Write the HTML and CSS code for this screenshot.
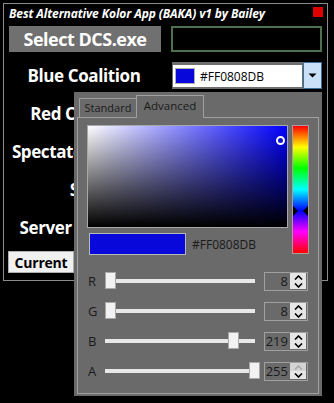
FILE: index.html
```html
<!DOCTYPE html>
<html lang="en">
<head>
    <meta charset="UTF-8">
    <meta name="viewport" content="width=device-width, initial-scale=1.0">
    <title>BAKA</title>
    <link rel="stylesheet" href="styles.css">
</head>
<body>
    <div class="window">
        <!-- Title bar -->
        <div class="title-bar">
            <span class="title">Best Alternative Kolor App (BAKA) v1 by Bailey</span>
            <span class="close-box"></span>
        </div>

        <!-- DCS path picker -->
        <div class="path-row">
            <button class="select-btn">Select DCS.exe</button>
            <div class="path-box"></div>
        </div>

        <!-- Coalition colour rows -->
        <div class="rows">
            <div class="label">Blue Coalition</div>
            <div class="color-combo">
                <div class="combo-field">
                    <span class="swatch"></span>
                    <span class="combo-text">#FF0808DB</span>
                </div>
                <div class="combo-arrow">
                    <svg width="9" height="5" viewBox="0 0 9 5"><path d="M0.5 0.5 L4.5 4.5 L8.5 0.5 Z" fill="#000"/></svg>
                </div>
            </div>

            <div class="label">Red Coalition</div>
            <div class="color-combo"></div>

            <div class="label">Spectators Colour</div>
            <div class="color-combo"></div>

            <div class="label">SRS</div>
            <div class="color-combo"></div>

            <div class="label">Server Coalition</div>
            <div class="color-combo"></div>
        </div>

        <button class="current-btn">Current</button>
    </div>

    <!-- Colour picker dropdown -->
    <div class="picker-popup">
        <div class="tab-strip">
            <div class="tab">Standard</div>
            <div class="tab active">Advanced</div>
        </div>
        <div class="tab-panel">
            <div class="picker-top">
                <div class="picker-left">
                    <div class="sv-box">
                        <span class="sv-dot"></span>
                    </div>
                    <div class="preview-row">
                        <div class="preview"></div>
                        <span class="preview-text">#FF0808DB</span>
                    </div>
                </div>
                <div class="hue-bar">
                    <span class="hue-mark left"></span>
                    <span class="hue-mark right"></span>
                </div>
            </div>

            <div class="sliders">
                <div class="slider-row">
                    <span class="slider-label">R</span>
                    <div class="track"><span class="thumb" style="left: 0px;"></span></div>
                    <div class="spin">
                        <span class="spin-value">8</span>
                        <div class="spin-btns">
                            <span class="spin-btn"><svg width="9" height="5" viewBox="0 0 9 5"><path d="M1 4.5 L4.5 1 L8 4.5" fill="none" stroke="#000" stroke-width="1.6"/></svg></span>
                            <span class="spin-btn"><svg width="9" height="5" viewBox="0 0 9 5"><path d="M1 0.5 L4.5 4 L8 0.5" fill="none" stroke="#000" stroke-width="1.6"/></svg></span>
                        </div>
                    </div>
                </div>
                <div class="slider-row">
                    <span class="slider-label">G</span>
                    <div class="track"><span class="thumb" style="left: 0px;"></span></div>
                    <div class="spin">
                        <span class="spin-value">8</span>
                        <div class="spin-btns">
                            <span class="spin-btn"><svg width="9" height="5" viewBox="0 0 9 5"><path d="M1 4.5 L4.5 1 L8 4.5" fill="none" stroke="#000" stroke-width="1.6"/></svg></span>
                            <span class="spin-btn"><svg width="9" height="5" viewBox="0 0 9 5"><path d="M1 0.5 L4.5 4 L8 0.5" fill="none" stroke="#000" stroke-width="1.6"/></svg></span>
                        </div>
                    </div>
                </div>
                <div class="slider-row">
                    <span class="slider-label">B</span>
                    <div class="track"><span class="thumb" style="left: 123px;"></span></div>
                    <div class="spin">
                        <span class="spin-value">219</span>
                        <div class="spin-btns">
                            <span class="spin-btn"><svg width="9" height="5" viewBox="0 0 9 5"><path d="M1 4.5 L4.5 1 L8 4.5" fill="none" stroke="#000" stroke-width="1.6"/></svg></span>
                            <span class="spin-btn"><svg width="9" height="5" viewBox="0 0 9 5"><path d="M1 0.5 L4.5 4 L8 0.5" fill="none" stroke="#000" stroke-width="1.6"/></svg></span>
                        </div>
                    </div>
                </div>
                <div class="slider-row">
                    <span class="slider-label">A</span>
                    <div class="track"><span class="thumb" style="left: 144px;"></span></div>
                    <div class="spin">
                        <span class="spin-value">255</span>
                        <div class="spin-btns">
                            <span class="spin-btn disabled"><svg width="9" height="5" viewBox="0 0 9 5"><path d="M1 4.5 L4.5 1 L8 4.5" fill="none" stroke="#a8a8a8" stroke-width="1.6"/></svg></span>
                            <span class="spin-btn"><svg width="9" height="5" viewBox="0 0 9 5"><path d="M1 0.5 L4.5 4 L8 0.5" fill="none" stroke="#000" stroke-width="1.6"/></svg></span>
                        </div>
                    </div>
                </div>
            </div>
        </div>
    </div>
</body>
</html>
```

FILE: styles.css
```css
/* Dark window theme */
* {
    box-sizing: border-box;
}

body {
    margin: 0;
    padding: 0;
    width: 334px;
    height: 403px;
    background: #000000;
    font-family: "Open Sans", "Noto Sans", sans-serif;
    color: #ffffff;
    position: relative;
    overflow: hidden;
}

/* Main window frame */
.window {
    margin: 3px 0 0 3px;
    width: 325px;
    height: 278px;
    border: 1px solid #8c8c8c;
}

.title-bar {
    display: flex;
    justify-content: space-between;
    align-items: flex-start;
    height: 22px;
    padding: 3px 4px 0 5px;
}

.title {
    font-size: 12px;
    font-weight: bold;
    font-style: italic;
    line-height: 14px;
    letter-spacing: -0.1px;
}

.close-box {
    width: 10px;
    height: 10px;
    background: #e00000;
}

/* Select DCS.exe row */
.path-row {
    display: flex;
    padding-left: 5px;
}

.select-btn {
    width: 152px;
    height: 26px;
    border: none;
    background: #707070;
    color: #ffffff;
    font-family: inherit;
    font-size: 18px;
    font-weight: bold;
    letter-spacing: -0.5px;
    line-height: 26px;
    padding: 0;
}

.path-box {
    margin-left: 10px;
    width: 151px;
    height: 26px;
    border: 2px solid #4f704f;
    background: #000000;
}

/* Label + colour combo rows */
.rows {
    display: grid;
    grid-template-columns: 160px 150px;
    grid-auto-rows: 27px;
    column-gap: 8px;
    row-gap: 11px;
    margin-top: 10px;
}

.label {
    text-align: center;
    font-size: 17px;
    font-weight: bold;
    letter-spacing: -0.4px;
    line-height: 27px;
    white-space: nowrap;
}

.color-combo {
    display: flex;
    background: #6e6e6e;
}

.combo-field {
    flex: 1;
    display: flex;
    align-items: center;
    margin: 3px 1px 2px 1px;
    background: #ffffff;
}

.swatch {
    width: 20px;
    height: 16px;
    margin-left: 2px;
    background: #0808db;
    border: 1px solid #b0b0b0;
}

.combo-text {
    margin-left: 5px;
    font-size: 12px;
    color: #000000;
}

.combo-arrow {
    width: 19px;
    display: flex;
    align-items: center;
    justify-content: center;
    background: #c9e0f7;
    border: 1px solid #3c6e99;
}

.current-btn {
    margin: 10px 0 0 4px;
    width: 66px;
    height: 22px;
    padding: 0;
    background: #f0f0f0;
    border: 1px solid #adadad;
    font-family: inherit;
    font-size: 14px;
    font-weight: bold;
    letter-spacing: -0.2px;
    color: #000000;
}

/* Colour picker dropdown */
.picker-popup {
    position: absolute;
    left: 74px;
    top: 92px;
    width: 248px;
    height: 304px;
    background: #6a6a6a;
    padding: 3px 3px 0 3px;
    color: #1a1a1a;
}

.tab-strip {
    display: flex;
    align-items: flex-end;
    height: 22px;
    padding-left: 2px;
}

.tab {
    height: 19px;
    width: 58px;
    border: 1px solid #a0a0a0;
    border-bottom: none;
    font-size: 11px;
    line-height: 18px;
    text-align: center;
    white-space: nowrap;
}

.tab.active {
    height: 23px;
    width: 68px;
    margin-left: -1px;
    margin-bottom: -1px;
    font-size: 11.5px;
    background: #6a6a6a;
    position: relative;
    z-index: 1;
    line-height: 20px;
}

.tab-panel {
    height: 277px;
    border: 1px solid #a0a0a0;
    padding: 7px 0 0 9px;
}

.picker-top {
    display: flex;
}

.sv-box {
    position: relative;
    width: 201px;
    height: 103px;
    border: 1px solid #a8a8a8;
    background: linear-gradient(to top, #000000, rgba(0, 0, 0, 0)),
                linear-gradient(to right, #ffffff, #0000ff);
}

.sv-dot {
    position: absolute;
    left: 188px;
    top: 10px;
    width: 9px;
    height: 9px;
    border-radius: 50%;
    border: 2px solid #ffffff;
    background: #1010d8;
}

.preview-row {
    display: flex;
    align-items: center;
    margin-top: 5px;
    padding-left: 2px;
}

.preview {
    width: 97px;
    height: 22px;
    background: #0808db;
    border: 1px solid #b8b8b8;
}

.preview-text {
    margin-left: 6px;
    font-size: 12px;
}

.hue-bar {
    position: relative;
    margin-left: 4px;
    width: 17px;
    height: 129px;
    border: 1px solid #b09a9a;
    background: linear-gradient(to bottom, #ff0000, #ffff00 16.7%, #00ff00 33.3%, #00ffff 50%, #0000ff 66.7%, #ff00ff 83.3%, #ff0000);
}

.hue-mark {
    position: absolute;
    top: 80px;
    width: 0;
    height: 0;
    border-top: 5px solid transparent;
    border-bottom: 5px solid transparent;
}

.hue-mark.left {
    left: 0;
    border-left: 5px solid #000000;
}

.hue-mark.right {
    right: 0;
    border-right: 5px solid #000000;
}

/* R G B A sliders */
.sliders {
    margin-top: 11px;
}

.slider-row {
    display: flex;
    align-items: center;
    height: 30px;
    padding-left: 1px;
}

.slider-label {
    width: 17px;
    font-size: 13px;
}

.track {
    position: relative;
    width: 150px;
    height: 4px;
    background: #e8e8e8;
}

.thumb {
    position: absolute;
    top: -7px;
    width: 11px;
    height: 17px;
    background: #f2f2f2;
    border: 1px solid #a8a8a8;
}

.spin {
    display: flex;
    align-items: center;
    margin-left: 9px;
    width: 44px;
    height: 19px;
    border: 1px solid #a0a0a0;
}

.spin-value {
    flex: 1;
    text-align: right;
    padding-right: 2px;
    font-size: 13px;
}

.spin-btns {
    display: flex;
    flex-direction: column;
    margin-right: 1px;
}

.spin-btn {
    display: flex;
    align-items: center;
    justify-content: center;
    width: 16px;
    height: 8px;
    background: #e6e6e6;
}

.spin-btn.disabled {
    background: #d4d4d4;
}
```
